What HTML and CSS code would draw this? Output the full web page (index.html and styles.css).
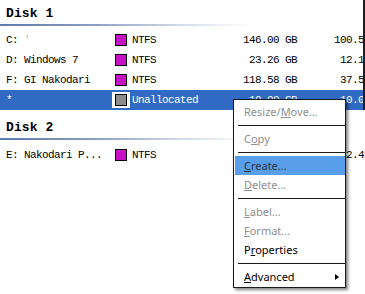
FILE: index.html
```html
<!DOCTYPE html>
<html>
<head>
<meta charset="utf-8">
<link rel="stylesheet" href="styles.css">
</head>
<body>
<div class="screen">
  <section class="disk disk-first">
    <div class="disk-head">Disk 1</div>
    <div class="disk-rule"></div>
    <div class="rows">
      <div class="row">
        <span class="name">C: <span class="faint">'</span></span>
        <span class="swatch-wrap"><span class="swatch ntfs"></span></span>
        <span class="fs">NTFS</span>
        <span class="size">146.00 GB</span>
        <span class="free">100.52 GB</span>
      </div>
      <div class="row">
        <span class="name">D: Windows 7</span>
        <span class="swatch-wrap"><span class="swatch ntfs"></span></span>
        <span class="fs">NTFS</span>
        <span class="size">23.26 GB</span>
        <span class="free">12.16 GB</span>
      </div>
      <div class="row">
        <span class="name">F: GI Nakodari</span>
        <span class="swatch-wrap"><span class="swatch ntfs"></span></span>
        <span class="fs">NTFS</span>
        <span class="size">118.58 GB</span>
        <span class="free">37.54 GB</span>
      </div>
      <div class="row selected">
        <span class="name">*</span>
        <span class="swatch-wrap boxed"><span class="swatch unalloc"></span></span>
        <span class="fs">Unallocated</span>
        <span class="size">10.00 GB</span>
        <span class="free">10.00 GB</span>
      </div>
    </div>
  </section>

  <section class="disk disk-second">
    <div class="disk-head">Disk 2</div>
    <div class="disk-rule"></div>
    <div class="rows rows-second">
      <div class="row">
        <span class="name">E: Nakodari P...</span>
        <span class="swatch-wrap"><span class="swatch ntfs"></span></span>
        <span class="fs">NTFS</span>
        <span class="size">298.09 GB</span>
        <span class="free">232.41 GB</span>
      </div>
    </div>
  </section>

  <div class="menu">
    <div class="item disabled">Resize/<u>M</u>ove...</div>
    <div class="sep"></div>
    <div class="item disabled">C<u>o</u>py</div>
    <div class="sep"></div>
    <div class="item hot"><u>C</u>reate...</div>
    <div class="item disabled"><u>D</u>elete...</div>
    <div class="sep"></div>
    <div class="item disabled"><u>L</u>abel...</div>
    <div class="item disabled"><u>F</u>ormat...</div>
    <div class="item">P<u>r</u>operties</div>
    <div class="sep"></div>
    <div class="item"><u>A</u>dvanced<span class="arrow"></span></div>
  </div>
</div>
</body>
</html>
```

FILE: styles.css
```css
html, body {
  margin: 0;
  padding: 0;
  background: #ffffff;
  overflow: hidden;
}

.screen {
  position: relative;
  width: 365px;
  height: 294px;
  overflow: hidden;
  background: #ffffff;
  color: #000000;
}

.disk {
  display: flex;
  flex-direction: column;
}

.disk-first {
  width: 365px;
  box-sizing: border-box;
  padding-right: 2px;
  border-right: 2px solid #1e1e1e;
  overflow: hidden;
}

.disk-second {
  margin-top: 4px;
  overflow: hidden;
}

.disk-head {
  height: 24px;
  box-sizing: border-box;
  padding: 3px 0 0 6px;
  display: flex;
  align-items: center;
  font-family: "Liberation Mono", monospace;
  font-weight: bold;
  font-size: 13px;
  letter-spacing: 0.1px;
}

.disk-rule {
  height: 2px;
  background: linear-gradient(to right, #5f79aa 0%, #8a9cc0 25%, #d3dae8 50%, rgba(255,255,255,0) 70%);
}

.rows {
  padding-top: 4px;
  display: flex;
  flex-direction: column;
}

.rows-second {
  padding-top: 5px;
}

.row {
  display: grid;
  grid-template-columns: 109px 17px 108px 57px 91px;
  align-items: center;
  height: 20px;
  width: 388px;
  box-sizing: border-box;
  padding-left: 6px;
  font-family: "Liberation Mono", monospace;
  font-size: 11px;
  letter-spacing: -0.6px;
  white-space: nowrap;
}

.row.selected {
  background: #316ac5;
  color: #ffffff;
}

.faint {
  color: #b8b8b8;
}

.swatch-wrap {
  display: flex;
  justify-self: start;
}

.swatch-wrap.boxed {
  background: #ffffff;
  padding: 2px 3px;
  margin-left: -3px;
}

.swatch {
  width: 12px;
  height: 12px;
  box-sizing: border-box;
  border: 1px solid #000000;
}

.swatch.ntfs {
  background: #c412c4;
}

.swatch.unalloc {
  background: #8c8c8c;
}

.size, .free {
  text-align: right;
}

.menu {
  position: absolute;
  left: 233px;
  top: 99px;
  width: 113px;
  box-sizing: border-box;
  border: 1px solid #1a1a1a;
  background: #ffffff;
  padding: 2px 0 1px 1px;
  box-shadow: 2px 2px 3px rgba(0, 0, 0, 0.5);
  font-family: "Noto Sans", sans-serif;
  font-size: 11px;
  display: flex;
  flex-direction: column;
}

.item {
  height: 19px;
  display: flex;
  align-items: center;
  padding-left: 9px;
  color: #000000;
  white-space: nowrap;
}

.item u {
  text-decoration: underline;
  text-underline-offset: 1px;
}

.item.disabled {
  color: #8f8f8f;
}

.item.hot {
  background: #589ee9;
  color: #2c3440;
}

.sep {
  height: 8px;
  display: flex;
  align-items: center;
  padding-left: 3px;
}

.sep::before {
  content: "";
  display: block;
  height: 1px;
  flex: 1;
  background: #1a1a1a;
}

.arrow {
  margin-left: auto;
  margin-right: 6px;
  width: 0;
  height: 0;
  border-left: 4px solid #000000;
  border-top: 3.5px solid transparent;
  border-bottom: 3.5px solid transparent;
}
```
